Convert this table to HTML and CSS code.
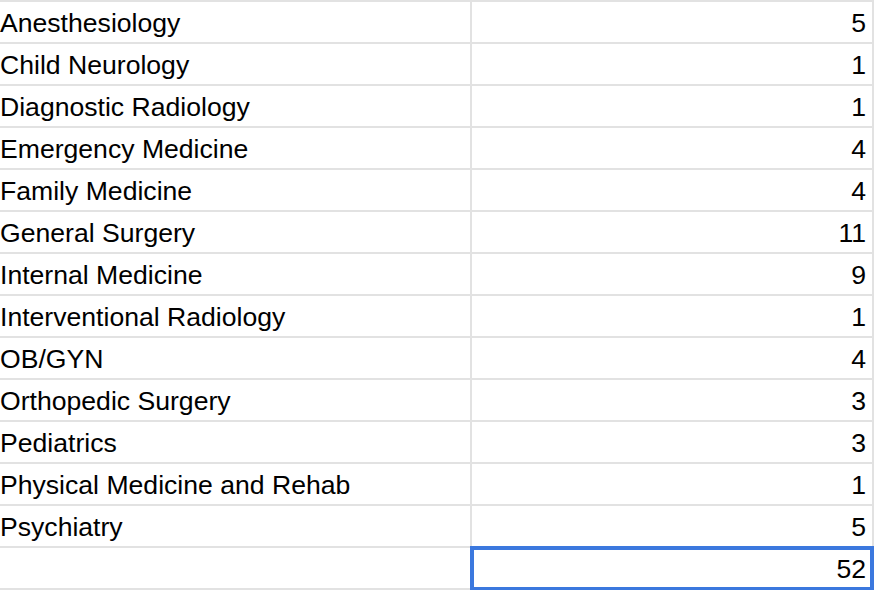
FILE: index.html
```html
<!DOCTYPE html>
<html>
<head>
<meta charset="utf-8">
<link rel="stylesheet" href="styles.css">
</head>
<body>
<div class="sheet">
  <div class="row"><div class="name">Anesthesiology</div><div class="num">5</div></div>
  <div class="row"><div class="name">Child Neurology</div><div class="num">1</div></div>
  <div class="row"><div class="name">Diagnostic Radiology</div><div class="num">1</div></div>
  <div class="row"><div class="name">Emergency Medicine</div><div class="num">4</div></div>
  <div class="row"><div class="name">Family Medicine</div><div class="num">4</div></div>
  <div class="row"><div class="name">General Surgery</div><div class="num">11</div></div>
  <div class="row"><div class="name">Internal Medicine</div><div class="num">9</div></div>
  <div class="row"><div class="name">Interventional Radiology</div><div class="num">1</div></div>
  <div class="row"><div class="name">OB/GYN</div><div class="num">4</div></div>
  <div class="row"><div class="name">Orthopedic Surgery</div><div class="num">3</div></div>
  <div class="row"><div class="name">Pediatrics</div><div class="num">3</div></div>
  <div class="row"><div class="name">Physical Medicine and Rehab</div><div class="num">1</div></div>
  <div class="row"><div class="name">Psychiatry</div><div class="num">5</div></div>
  <div class="row last"><div class="name"></div><div class="num selected">52</div></div>
</div>
</body>
</html>
```
FILE: styles.css
```css
html, body {
  margin: 0;
  padding: 0;
  background: #ffffff;
}
.sheet {
  width: 874px;
  font-family: "Liberation Sans", Arial, sans-serif;
  font-size: 26.6px;
  color: #000000;
}
.row {
  display: grid;
  grid-template-columns: 470px 2px 400px 2px;
  border-top: 2px solid #e2e2e2;
  height: 40px;
  background:
    linear-gradient(#e2e2e2, #e2e2e2) 470px 0 / 2px 100% no-repeat,
    linear-gradient(#e2e2e2, #e2e2e2) 872px 0 / 2px 100% no-repeat;
}
.row.last {
  border-bottom: 2px solid #e2e2e2;
}
.name {
  grid-column: 1;
  line-height: 40px;
  padding-top: 1px;
  padding-left: 0;
  white-space: nowrap;
}
.num {
  grid-column: 3;
  line-height: 40px;
  padding-top: 1px;
  text-align: right;
  padding-right: 6px;
  position: relative;
}
.selected::after {
  content: "";
  position: absolute;
  left: -2px;
  top: -2px;
  right: -2px;
  bottom: -2px;
  border: 4px solid #3b78de;
  box-sizing: border-box;
}
```
